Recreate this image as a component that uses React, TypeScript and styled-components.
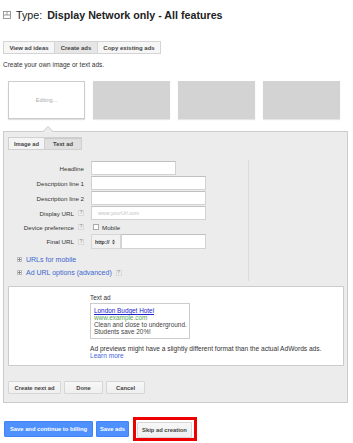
import styled, { createGlobalStyle, css } from "styled-components";

const GlobalStyle = createGlobalStyle`
  html, body {
    margin: 0;
    padding: 0;
    background: #fff;
    font-family: "Liberation Sans", Arial, sans-serif;
    color: #333;
  }
`;

const Page = styled.div`
  width: 353px;
  height: 443px;
  overflow: hidden;
  padding-left: 3px;
  box-sizing: border-box;
`;

const TitleRow = styled.div`
  display: flex;
  align-items: center;
  height: 12px;
  margin-top: 9px;
  font-size: 10.7px;
  color: #222;
  svg {
    margin-right: 5px;
  }
  b {
    margin-left: 5px;
    font-weight: 700;
  }
`;

const ButtonGroup = styled.div`
  display: flex;
  margin-top: 20px;
`;

const GroupButton = styled.div<{ $w: number; $active?: boolean }>`
  width: ${(p) => p.$w}px;
  height: 13px;
  box-sizing: border-box;
  border: 1px solid #d4d4d4;
  margin-left: -1px;
  &:first-child {
    margin-left: 0;
  }
  background: ${(p) => (p.$active ? "#e6e6e6" : "#f6f6f6")};
  font-size: 6px;
  font-weight: 700;
  color: #444;
  display: flex;
  align-items: center;
  justify-content: center;
`;

const Caption = styled.div`
  font-size: 6.5px;
  color: #333;
  margin-top: 7px;
`;

const ThumbRow = styled.div`
  display: flex;
  gap: 8px;
  margin-top: 13px;
  padding-left: 5px;
`;

const Thumb = styled.div<{ $editing?: boolean }>`
  width: 77px;
  height: 38px;
  box-sizing: border-box;
  display: flex;
  align-items: center;
  justify-content: center;
  font-size: 5.5px;
  color: #aaa;
  ${(p) =>
    p.$editing
      ? css`
          background: #fff;
          border: 1px solid #ccc;
          box-shadow: 0 1px 1px rgba(0, 0, 0, 0.12);
        `
      : css`
          background: #d3d3d3;
          box-shadow: 0 1px 1px rgba(0, 0, 0, 0.1);
        `}
`;

const Panel = styled.div`
  position: relative;
  margin-top: 12px;
  width: 345px;
  box-sizing: border-box;
  background: #ececec;
  border: 1px solid #ccc;
  padding: 5px 0 8px;
  &::before,
  &::after {
    content: "";
    position: absolute;
    left: 38px;
    border: 6px solid transparent;
    border-top: 0;
    border-bottom-width: 6px;
  }
  &::before {
    top: -6px;
    border-bottom-color: #ccc;
  }
  &::after {
    top: -5px;
    border-bottom-color: #ececec;
  }
`;

const InnerTabs = styled.div`
  display: flex;
  padding-left: 4px;
`;

const InnerTab = styled.div<{ $w: number; $pressed?: boolean }>`
  width: ${(p) => p.$w}px;
  height: 13px;
  box-sizing: border-box;
  border: 1px solid #d0d0d0;
  margin-left: -1px;
  &:first-child {
    margin-left: 0;
  }
  background: ${(p) => (p.$pressed ? "#e0e0e0" : "#f4f4f4")};
  box-shadow: ${(p) => (p.$pressed ? "inset 0 1px 1px rgba(0,0,0,0.1)" : "none")};
  font-size: 5.8px;
  font-weight: 700;
  color: #444;
  display: flex;
  align-items: center;
  justify-content: center;
`;

const FormArea = styled.div`
  display: flex;
  margin-top: 10px;
`;

const FormColumn = styled.div`
  width: 244px;
  padding-top: 1px;
  padding-bottom: 2px;
`;

const Divider = styled.div`
  width: 1px;
  background: #dcdcdc;
`;

const FormGrid = styled.div`
  display: grid;
  grid-template-columns: 80px 1fr;
  column-gap: 7px;
  row-gap: 1px;
  align-items: center;
`;

const Label = styled.div`
  font-size: 6.2px;
  color: #333;
  text-align: right;
  display: flex;
  justify-content: flex-end;
  align-items: center;
  gap: 4px;
`;

const Help = styled.span`
  width: 6px;
  height: 6px;
  box-sizing: border-box;
  border: 1px solid #dadada;
  background: #efefef;
  font-size: 4.5px;
  line-height: 4px;
  font-weight: 700;
  color: #999;
  text-align: center;
  display: inline-block;
`;

const Input = styled.div<{ $w: number; $h?: number }>`
  width: ${(p) => p.$w}px;
  height: ${(p) => p.$h ?? 14}px;
  box-sizing: border-box;
  background: #fff;
  border: 1px solid #d2d2d2;
  border-top-color: #c0c0c0;
  font-size: 5.3px;
  color: #c4c4c4;
  display: flex;
  align-items: center;
  padding-left: 6px;
`;

const CheckRow = styled.div`
  height: 12px;
  display: flex;
  align-items: center;
  gap: 3px;
  padding-left: 2px;
  font-size: 6.2px;
  color: #333;
`;

const Checkbox = styled.span`
  width: 6px;
  height: 6px;
  box-sizing: border-box;
  background: #fff;
  border: 1px solid #aaa;
`;

const UrlRow = styled.div`
  display: flex;
  height: 15px;
`;

const Select = styled.div`
  width: 30px;
  box-sizing: border-box;
  background: #f1f1f1;
  border: 1px solid #d6d6d6;
  font-size: 5.2px;
  font-weight: 700;
  color: #333;
  display: flex;
  align-items: center;
  gap: 2px;
  padding-left: 3px;
  svg {
    margin-left: 1px;
  }
`;

const Expander = styled.div<{ $first?: boolean }>`
  display: flex;
  align-items: center;
  gap: 4px;
  height: 13px;
  margin-top: ${(p) => (p.$first ? 4 : 0)}px;
  padding-left: 13px;
  font-size: 7px;
  color: #4166d0;
`;

const PlusBox = styled.span`
  width: 5px;
  height: 5px;
  box-sizing: border-box;
  border: 1px solid #bbb;
  background: #f6f6f6;
  position: relative;
  &::before,
  &::after {
    content: "";
    position: absolute;
    background: #888;
  }
  &::before {
    left: 0;
    top: 1px;
    width: 3px;
    height: 1px;
  }
  &::after {
    left: 1px;
    top: 0;
    width: 1px;
    height: 3px;
  }
`;

const PreviewBox = styled.div`
  margin: 5px 3px 0 4px;
  height: 80px;
  box-sizing: border-box;
  background: #fff;
  border: 1px solid #ccc;
  padding: 7px 0 0 81px;
  font-size: 6.4px;
  color: #333;
`;

const AdCard = styled.div`
  width: 100px;
  box-sizing: border-box;
  border: 1px solid #ccc;
  padding: 3px 0 3px 3px;
  margin-top: 2px;
  font-size: 6.4px;
  line-height: 7px;
  color: #444;
  a {
    color: #2222cc;
    text-decoration: underline;
    text-decoration-thickness: 1px;
  }
`;

const GreenUrl = styled.div`
  color: #5aa45a;
`;

const Note = styled.div`
  margin-top: 6px;
  line-height: 7px;
  font-size: 6.6px;
  span {
    color: #4466dd;
  }
`;

const PanelButtons = styled.div`
  display: flex;
  gap: 3px;
  margin: 15px 0 0 4px;
`;

const GrayButton = styled.div<{ $w: number; $h?: number }>`
  width: ${(p) => p.$w}px;
  height: ${(p) => p.$h ?? 13}px;
  box-sizing: border-box;
  background: linear-gradient(#f7f7f7, #efefef);
  border: 1px solid #d6d6d6;
  border-radius: 1px;
  font-size: 5.8px;
  font-weight: 700;
  color: #444;
  display: flex;
  align-items: center;
  justify-content: center;
`;

const BottomBar = styled.div`
  display: flex;
  align-items: center;
  gap: 3px;
  margin-top: 14px;
  padding-left: 1px;
`;

const BlueButton = styled.div<{ $w: number }>`
  width: ${(p) => p.$w}px;
  height: 16px;
  box-sizing: border-box;
  background: #4d90fe;
  border: 1px solid #3f84f4;
  border-radius: 1px;
  font-size: 5.8px;
  font-weight: 700;
  color: #fff;
  display: flex;
  align-items: center;
  justify-content: center;
`;

// red annotation frame around the skip button
const Highlight = styled.div`
  border: 3px solid #ee0000;
  padding: 2px 2px 0 1px;
  margin-left: 1px;
  height: 24px;
  box-sizing: border-box;
`;

const TitleIcon = () => (
  <svg width="8" height="8" viewBox="0 0 8 8">
    <rect x="0.5" y="0.5" width="7" height="7" fill="none" stroke="#999" />
    <line x1="0.5" y1="4" x2="7.5" y2="4" stroke="#999" />
    <line x1="4" y1="0.5" x2="4" y2="4" stroke="#999" />
  </svg>
);

const Arrows = () => (
  <svg width="3" height="6" viewBox="0 0 3 6">
    <path d="M0 2.5 L1.5 0.5 L3 2.5Z M0 3.5 L1.5 5.5 L3 3.5Z" fill="#555" />
  </svg>
);

export default function App() {
  return (
    <Page>
      <GlobalStyle />
      <TitleRow>
        <TitleIcon />
        Type:<b>Display Network only - All features</b>
      </TitleRow>

      <ButtonGroup>
        <GroupButton $w={52}>View ad ideas</GroupButton>
        <GroupButton $w={44} $active>
          Create ads
        </GroupButton>
        <GroupButton $w={64}>Copy existing ads</GroupButton>
      </ButtonGroup>

      <Caption>Create your own image or text ads.</Caption>

      {/* Ad thumbnails */}
      <ThumbRow>
        <Thumb $editing>Editing...</Thumb>
        <Thumb />
        <Thumb />
        <Thumb />
      </ThumbRow>

      <Panel>
        <InnerTabs>
          <InnerTab $w={37}>Image ad</InnerTab>
          <InnerTab $w={38} $pressed>
            Text ad
          </InnerTab>
        </InnerTabs>

        <FormArea>
          <FormColumn>
            <FormGrid>
              <Label>Headline</Label>
              <Input $w={85} />
              <Label>Description line 1</Label>
              <Input $w={115} />
              <Label>Description line 2</Label>
              <Input $w={115} />
              <Label>
                Display URL <Help>?</Help>
              </Label>
              <Input $w={115}>www.yourUrl.com</Input>
              <Label>
                Device preference <Help>?</Help>
              </Label>
              <CheckRow>
                <Checkbox />
                Mobile
              </CheckRow>
              <Label>
                Final URL <Help>?</Help>
              </Label>
              <UrlRow>
                <Select>
                  http://
                  <Arrows />
                </Select>
                <Input $w={85} $h={15} />
              </UrlRow>
            </FormGrid>

            <Expander $first>
              <PlusBox />
              URLs for mobile
            </Expander>
            <Expander>
              <PlusBox />
              Ad URL options (advanced) <Help>?</Help>
            </Expander>
          </FormColumn>
          <Divider />
        </FormArea>

        {/* Ad preview */}
        <PreviewBox>
          Text ad
          <AdCard>
            <a>London Budget Hotel</a>
            <GreenUrl>www.example.com</GreenUrl>
            <div>Clean and close to underground.</div>
            <div>Students save 20%!</div>
          </AdCard>
          <Note>
            Ad previews might have a slightly different format than the actual AdWords ads.
            <br />
            <span>Learn more</span>
          </Note>
        </PreviewBox>

        <PanelButtons>
          <GrayButton $w={53}>Create next ad</GrayButton>
          <GrayButton $w={39}>Done</GrayButton>
          <GrayButton $w={39}>Cancel</GrayButton>
        </PanelButtons>
      </Panel>

      <BottomBar>
        <BlueButton $w={89}>Save and continue to billing</BlueButton>
        <BlueButton $w={33}>Save ads</BlueButton>
        <Highlight>
          <GrayButton $w={55} $h={16}>
            Skip ad creation
          </GrayButton>
        </Highlight>
      </BottomBar>
    </Page>
  );
}
